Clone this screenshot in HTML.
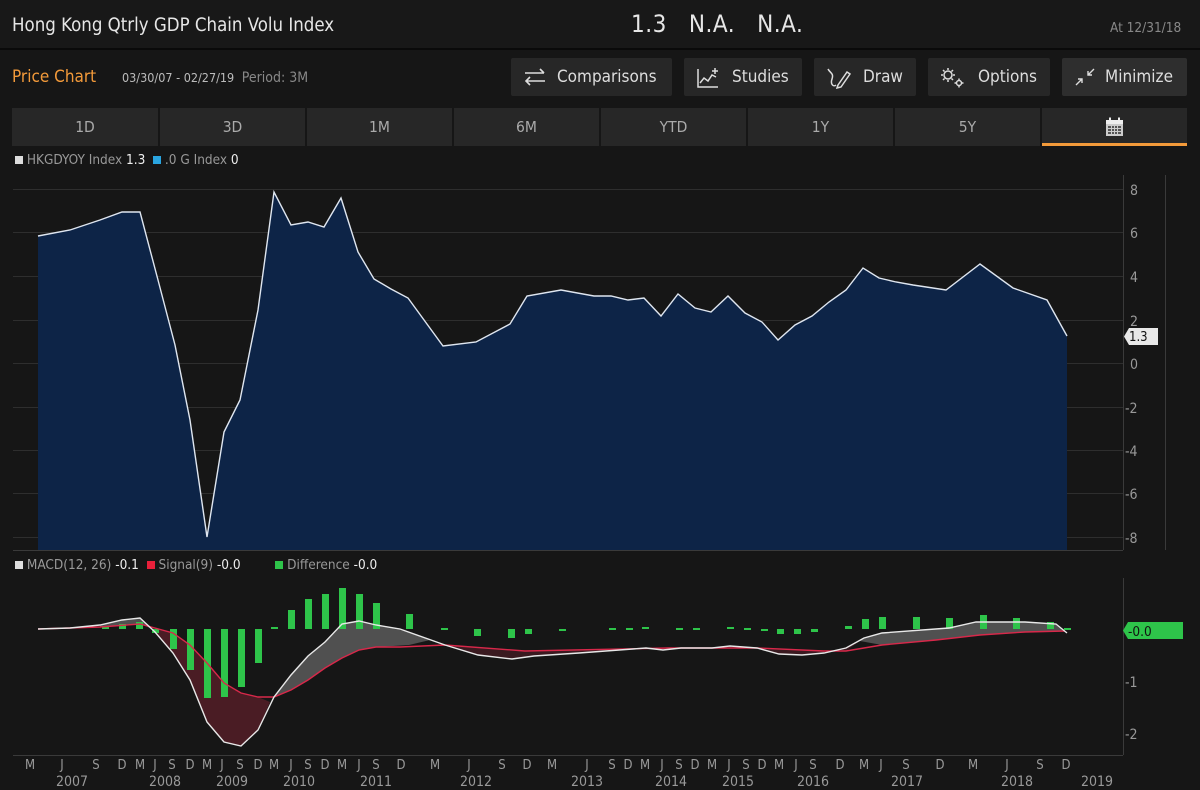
<!DOCTYPE html>
<html><head><meta charset="utf-8"><style>
*{margin:0;padding:0;box-sizing:border-box}
body{width:1200px;height:790px;background:#161616;font-family:"DejaVu Sans Condensed","Liberation Sans",sans-serif;color:#ddd;overflow:hidden;position:relative}
.hdr{position:absolute;left:0;top:0;width:1200px;height:50px;background:#181818;border-bottom:2px solid #0a0a0a}
.t{position:absolute;white-space:nowrap}
.btn{position:absolute;top:58px;height:38px;background:#272727;border-radius:2px;color:#ddd;font-size:17px;line-height:38px}
.btn svg{position:absolute;top:9px}
.tab{position:absolute;top:108px;height:38px;background:#272727;color:#aaa;font-size:15.5px;line-height:38px;text-align:center}
</style></head><body>
<div class="hdr"></div>
<div class="t" style="left:12px;top:15px;font-size:18.5px;color:#e6e6e6">Hong Kong Qtrly GDP Chain Volu Index</div>
<div class="t" style="left:631px;top:10px;font-size:24px;color:#e6e6e6;letter-spacing:0.5px">1.3&nbsp;&nbsp;&nbsp;N.A.&nbsp;&nbsp;&nbsp;N.A.</div>
<div class="t" style="left:1110px;top:20px;font-size:13.5px;color:#888">At 12/31/18</div>

<div class="t" style="left:12px;top:67px;font-size:17px;color:#f39a3a">Price Chart</div>
<div class="t" style="left:122px;top:70px;font-size:12.5px;color:#bbb">03/30/07 - 02/27/19 <span style="color:#888;font-size:14px">&nbsp;Period: 3M</span></div>

<div class="btn" style="left:511px;width:161px"><svg style="left:12px" width="24" height="20" viewBox="0 0 24 20" fill="none" stroke="#ddd" stroke-width="1.6"><path d="M2 6H21M17 2L21 6M22 14H3M7 10L3 14 7 18"/></svg><span style="position:absolute;left:46px">Comparisons</span></div>
<div class="btn" style="left:684px;width:118px"><svg style="left:12px" width="24" height="22" viewBox="0 0 24 22" fill="none" stroke="#ddd" stroke-width="1.5"><path d="M2 2V20H22M4 16L8 11 12 14 16 8 20 10M19 1V7M16 4H22"/></svg><span style="position:absolute;left:48px">Studies</span></div>
<div class="btn" style="left:814px;width:102px"><svg style="left:12px" width="26" height="22" viewBox="0 0 26 22" fill="none" stroke="#ddd" stroke-width="1.5"><path d="M2 2C4 6 8 6 6 12C4 18 8 20 10 18M12 18L21 5 24 7 15 20 11 21Z"/></svg><span style="position:absolute;left:49px">Draw</span></div>
<div class="btn" style="left:928px;width:122px"><svg style="left:12px" width="26" height="22" viewBox="0 0 26 22" fill="none" stroke="#ddd" stroke-width="1.5"><circle cx="8" cy="8" r="4"/><path d="M8 1V3M8 13V15M1 8H3M13 8H15M3 3L4.5 4.5M11.5 11.5L13 13M3 13L4.5 11.5M11.5 4.5L13 3"/><circle cx="19" cy="16" r="2.5"/><path d="M19 11.5V13M19 19V20.5M14.5 16H16M22 16H23.5"/></svg><span style="position:absolute;left:50px">Options</span></div>
<div class="btn" style="left:1062px;width:125px;background:#2e2e2e"><svg style="left:12px" width="22" height="20" viewBox="0 0 22 20" fill="none" stroke="#ddd" stroke-width="1.4"><path d="M2 18L8 12M4 12H8V16M20 2L14 8M14 4V8H18"/></svg><span style="position:absolute;left:43px">Minimize</span></div>

<div class="tab" style="left:12px;width:146px">1D</div>
<div class="tab" style="left:160px;width:145px">3D</div>
<div class="tab" style="left:307px;width:145px">1M</div>
<div class="tab" style="left:454px;width:145px">6M</div>
<div class="tab" style="left:601px;width:145px">YTD</div>
<div class="tab" style="left:748px;width:145px">1Y</div>
<div class="tab" style="left:895px;width:145px">5Y</div>
<div class="tab" style="left:1042px;width:145px;border-bottom:3px solid #f39a3a"><svg style="position:absolute;left:63px;top:9px" width="19" height="20" viewBox="0 0 19 20"><rect x="1" y="3" width="17" height="16" fill="#ccc"/><rect x="1" y="3" width="17" height="4" fill="#eee"/><rect x="4" y="0.5" width="2" height="4" fill="#eee"/><rect x="13" y="0.5" width="2" height="4" fill="#eee"/><g fill="#555"><rect x="3" y="9" width="3" height="2"/><rect x="7" y="9" width="2" height="2"/><rect x="10" y="9" width="2" height="2"/><rect x="13" y="9" width="3" height="2"/><rect x="3" y="12" width="3" height="2"/><rect x="7" y="12" width="2" height="2"/><rect x="10" y="12" width="2" height="2"/><rect x="13" y="12" width="3" height="2"/><rect x="3" y="15" width="3" height="2"/><rect x="7" y="15" width="2" height="2"/><rect x="10" y="15" width="2" height="2"/><rect x="13" y="15" width="3" height="2"/></g></svg></div>

<div class="t" style="left:15px;top:152px;font-size:13.5px;color:#999"><span style="display:inline-block;width:8px;height:8px;background:#ddd"></span> HKGDYOY Index <span style="color:#eee">1.3</span> &nbsp;<span style="display:inline-block;width:8px;height:8px;background:#2aa5e0"></span> .0 G Index <span style="color:#eee">0</span></div>
<div class="t" style="left:15px;top:557px;font-size:13.5px;color:#999"><span style="display:inline-block;width:8px;height:8px;background:#ddd"></span> MACD(12, 26) <span style="color:#eee">-0.1</span> &nbsp;<span style="display:inline-block;width:8px;height:8px;background:#e8203a"></span> Signal(9) <span style="color:#eee">-0.0</span> &nbsp;&nbsp;&nbsp;&nbsp;&nbsp;&nbsp;&nbsp;&nbsp;<span style="display:inline-block;width:8px;height:8px;background:#2ec44a"></span> Difference <span style="color:#eee">-0.0</span></div>

<svg style="position:absolute;left:0;top:0" width="1200" height="790" font-family="DejaVu Sans Condensed, Liberation Sans, sans-serif">
<g stroke="#2e2e2e" stroke-width="1">
<path d="M13 189.5H1123M13 232.5H1123M13 276.5H1123M13 320.5H1123M13 363.5H1123M13 407.5H1123M13 450.5H1123M13 493.5H1123M13 537.5H1123"/>
</g>
<path d="M13 550.5H1123M1123.5 175V550M1165.5 175V550M1123.5 578V755M13 755.5H1123" stroke="#3a3a3a"/>
<polygon fill="#0d2447" points="38,550 38,236 70,230 100,220 122,212 140,212 158,280 175,345 190,420 207,537 224,432 240,400 258,310 274,192 291,225 308,222 324,227 341,198 358,252 374,279 391,289 408,298 443,346 476,342 510,324 527,296 561,290 594,296 611,296 628,300 644,298 661,316 678,294 695,308 711,312 728,296 745,313 762,322 778,340 795,325 812,316 829,302 846,290 863,268 879,278 896,282 913,285 946,290 980,264 1013,288 1047,300 1067,336 1067,550"/>
<polyline fill="none" stroke="#dfe6f0" stroke-width="1.4" points="38,236 70,230 100,220 122,212 140,212 158,280 175,345 190,420 207,537 224,432 240,400 258,310 274,192 291,225 308,222 324,227 341,198 358,252 374,279 391,289 408,298 443,346 476,342 510,324 527,296 561,290 594,296 611,296 628,300 644,298 661,316 678,294 695,308 711,312 728,296 745,313 762,322 778,340 795,325 812,316 829,302 846,290 863,268 879,278 896,282 913,285 946,290 980,264 1013,288 1047,300 1067,336"/>
<g fill="#999" font-size="14">
<text x="1130" y="195">8</text><text x="1130" y="238">6</text><text x="1130" y="282">4</text><text x="1130" y="326">2</text><text x="1130" y="369">0</text><text x="1125" y="413">-2</text><text x="1125" y="456">-4</text><text x="1125" y="499">-6</text><text x="1125" y="543">-8</text>
<text x="1125" y="687">-1</text><text x="1125" y="739">-2</text>
</g>
<path d="M1129 328H1158V345H1129L1124 336.5Z" fill="#e8e8e8"/>
<text x="1129" y="341" font-size="13" fill="#111">1.3</text>

<polygon fill="#4a1c24" points="150,628 155,632 173,653 190,680 207,722 224,742 241,746 258,730 270,702 258,697 241,693 224,683 207,663 190,645 173,633"/>
<polygon fill="#505050" points="100,625 122,620 140,618 150,628 140,624 100,627"/>
<polygon fill="#505050" points="270,702 274,697 291,675 308,656 325,642 342,624 359,621 376,625 409,632 430,640 409,645 376,647 359,650 342,658 325,668 308,680 291,690 274,697"/>
<polygon fill="#3a1a20" points="430,640 445,645 478,655 512,659 534,656 579,653 646,648 663,650 681,648 712,648 757,648 779,654 802,655 824,653 846,648 860,641 846,651 824,651 757,648 668,648 525,651 445,645"/>
<polygon fill="#505050" points="860,641 864,638 882,633 949,628 976,622 1025,622 1056,624 1067,633 1065,631 1025,632 980,635 936,640 882,645"/>
<g fill="#2ec44a">
<rect x="102" y="626" width="7" height="3"/><rect x="119" y="624" width="7" height="5"/><rect x="136" y="622" width="7" height="7"/>
<rect x="152" y="629" width="7" height="4"/><rect x="170" y="629" width="7" height="20"/><rect x="187" y="629" width="7" height="41"/><rect x="204" y="629" width="7" height="69"/><rect x="221" y="629" width="7" height="68"/><rect x="238" y="629" width="7" height="58"/><rect x="255" y="629" width="7" height="34"/>
<rect x="271" y="627" width="7" height="2"/><rect x="288" y="610" width="7" height="19"/><rect x="305" y="599" width="7" height="30"/><rect x="322" y="594" width="7" height="35"/><rect x="339" y="588" width="7" height="41"/><rect x="356" y="594" width="7" height="35"/><rect x="373" y="603" width="7" height="26"/><rect x="406" y="614" width="7" height="15"/>
<rect x="441" y="628" width="7" height="2"/><rect x="474" y="629" width="7" height="7"/><rect x="508" y="629" width="7" height="9"/><rect x="525" y="629" width="7" height="5"/><rect x="559" y="629" width="7" height="2"/>
<rect x="609" y="628" width="7" height="2"/><rect x="626" y="628" width="7" height="2"/><rect x="642" y="627" width="7" height="2"/><rect x="676" y="628" width="7" height="2"/><rect x="693" y="628" width="7" height="2"/><rect x="727" y="627" width="7" height="2"/><rect x="744" y="628" width="7" height="2"/><rect x="761" y="629" width="7" height="2"/>
<rect x="777" y="629" width="7" height="5"/><rect x="794" y="629" width="7" height="5"/><rect x="811" y="629" width="7" height="3"/>
<rect x="845" y="626" width="7" height="3"/><rect x="862" y="619" width="7" height="10"/><rect x="879" y="617" width="7" height="12"/><rect x="913" y="617" width="7" height="12"/><rect x="946" y="618" width="7" height="11"/><rect x="980" y="615" width="7" height="14"/><rect x="1013" y="618" width="7" height="11"/><rect x="1047" y="622" width="7" height="7"/><rect x="1064" y="628" width="7" height="2"/>
</g>
<polyline fill="none" stroke="#d8284a" stroke-width="1.4" points="38,629 100,627 140,624 173,633 190,645 207,663 224,683 241,693 258,697 274,697 291,690 308,680 325,668 342,658 359,650 376,647 400,647 445,645 525,651 668,648 757,648 824,651 846,651 882,645 936,640 980,635 1025,632 1065,631"/>
<polyline fill="none" stroke="#e8e8e8" stroke-width="1.4" points="38,629 70,628 100,625 122,620 140,618 155,632 173,653 190,680 207,722 224,742 241,746 258,730 274,697 291,675 308,656 325,642 342,624 359,621 376,625 400,629 445,645 478,655 512,659 534,656 579,653 646,648 663,650 681,648 712,648 730,646 757,648 779,654 802,655 824,653 846,648 864,638 882,633 949,628 976,622 1025,622 1056,624 1067,633"/>
<path d="M1128 622H1183V639H1128L1123 630.5Z" fill="#2ec44a"/>
<text x="1128" y="636" font-size="13.5" fill="#111">-0.0</text>

<g fill="#999" font-size="13" text-anchor="middle">
<text x="30" y="769">M</text><text x="62" y="769">J</text><text x="96" y="769">S</text><text x="122" y="769">D</text><text x="140" y="769">M</text><text x="155" y="769">J</text><text x="172" y="769">S</text><text x="190" y="769">D</text><text x="207" y="769">M</text><text x="222" y="769">J</text><text x="240" y="769">S</text><text x="258" y="769">D</text><text x="274" y="769">M</text><text x="291" y="769">J</text><text x="308" y="769">S</text><text x="325" y="769">D</text><text x="342" y="769">M</text><text x="359" y="769">J</text><text x="376" y="769">S</text><text x="401" y="769">D</text><text x="435" y="769">M</text><text x="469" y="769">J</text><text x="502" y="769">S</text><text x="527" y="769">D</text><text x="552" y="769">M</text><text x="587" y="769">J</text><text x="612" y="769">S</text><text x="628" y="769">D</text><text x="645" y="769">M</text><text x="662" y="769">J</text><text x="679" y="769">S</text><text x="695" y="769">D</text><text x="712" y="769">M</text><text x="729" y="769">J</text><text x="746" y="769">S</text><text x="762" y="769">D</text><text x="779" y="769">M</text><text x="796" y="769">J</text><text x="813" y="769">S</text><text x="840" y="769">D</text><text x="864" y="769">M</text><text x="881" y="769">J</text><text x="906" y="769">S</text><text x="940" y="769">D</text><text x="973" y="769">M</text><text x="1007" y="769">J</text><text x="1040" y="769">S</text><text x="1066" y="769">D</text>
<g font-size="14"><text x="72" y="786">2007</text><text x="165" y="786">2008</text><text x="232" y="786">2009</text><text x="299" y="786">2010</text><text x="376" y="786">2011</text><text x="476" y="786">2012</text><text x="587" y="786">2013</text><text x="671" y="786">2014</text><text x="738" y="786">2015</text><text x="813" y="786">2016</text><text x="907" y="786">2017</text><text x="1017" y="786">2018</text><text x="1097" y="786">2019</text></g>
</g>
</svg>
</body></html>
